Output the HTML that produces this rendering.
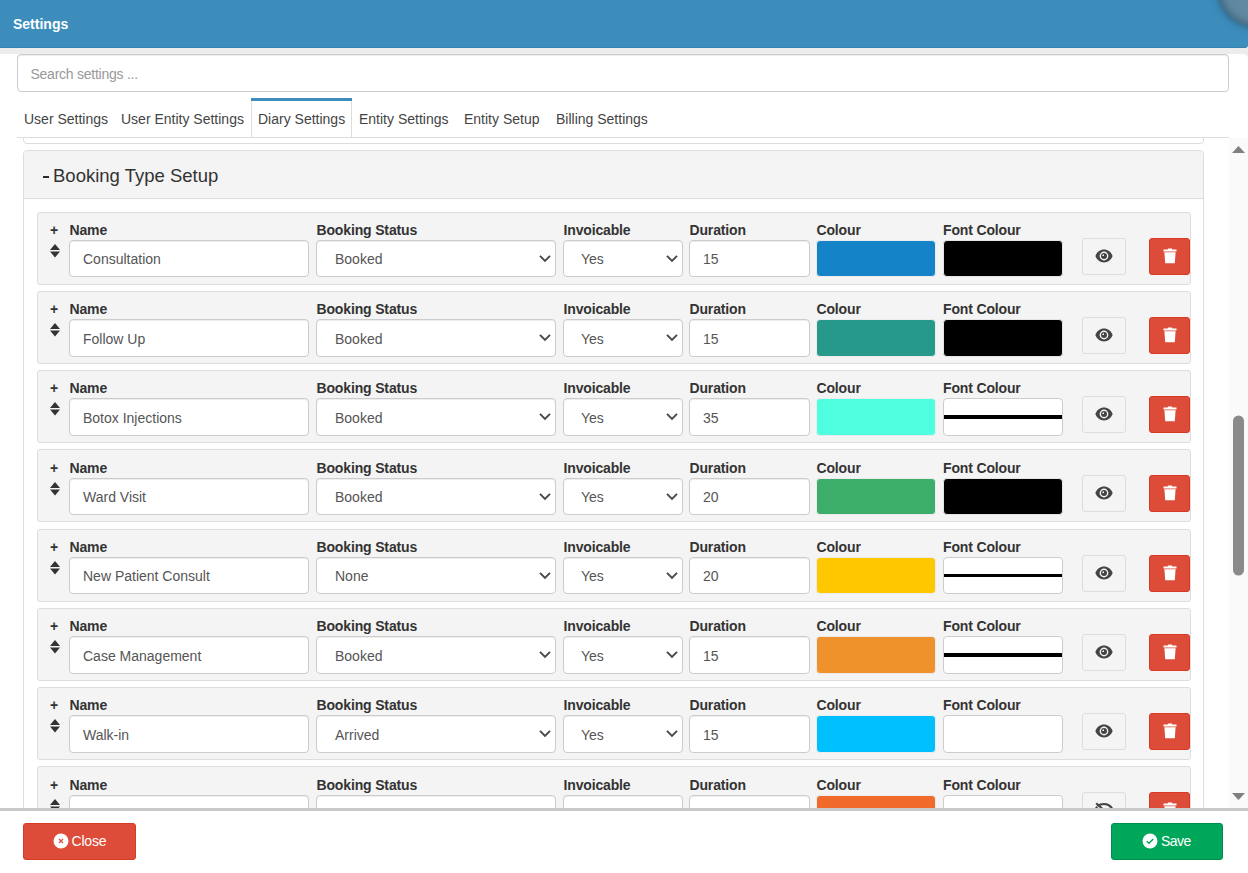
<!DOCTYPE html>
<html><head><meta charset="utf-8">
<style>
*{box-sizing:border-box;margin:0;padding:0}
html,body{width:1248px;height:873px;overflow:hidden;background:#fff;font-family:"Liberation Sans",sans-serif;color:#333}
.abs{position:absolute}
.t{position:absolute;white-space:nowrap;line-height:1}
#hdr{left:0;top:0;width:1248px;height:48px;background:#3c8dbc;border-bottom:1px solid #3582b0;overflow:hidden;border-bottom-right-radius:3px}
#hdr .t{color:#fff;font-weight:bold;font-size:14px;left:13px;top:17px}
#circ{left:1219px;top:-46px;width:72px;height:72px;border-radius:50%;background:#618aa2;box-shadow:0 0 6px 2px rgba(45,80,105,.7),inset 0 0 6px 3px rgba(65,100,125,.85);filter:blur(1.2px)}
#strip{left:0;top:48px;width:1248px;height:6px;background:#ececec}
#search{left:17px;top:54px;width:1212px;height:38px;border:1px solid #ccc;border-radius:4px;background:#fff;box-shadow:inset 0 1px 1px rgba(0,0,0,.075)}
#search .t{left:12.5px;top:11.6px;font-size:14px;letter-spacing:-0.25px;color:#999}
.tab{position:absolute;top:98px;height:40px;font-size:14px;color:#444}
.tab .t{top:14px}
#tabact{left:251px;top:98px;width:101px;height:40px;border:1px solid #ddd;border-top:none;border-bottom:none;background:#fff}#tabact:before{content:"";position:absolute;left:-1px;top:0;width:101px;height:3px;background:#3c8dbc}
#tabline{left:17px;top:137px;width:1212px;height:1px;background:#ddd}
#scroll{left:0;top:138px;width:1229px;height:670px;overflow:hidden}
#prev{left:23px;top:-40px;width:1181px;height:46px;border:1px solid #ddd;border-radius:4px}
#panel{left:23px;top:12px;width:1181px;height:1000px;border:1px solid #ddd;border-radius:4px;background:#fff}
#phead{left:0;top:0;width:1179px;height:48px;background:#f4f4f4;border-bottom:1px solid #ddd;border-radius:3px 3px 0 0}
#phead .t{font-size:18.5px;color:#333}
.row{position:absolute;left:37px;width:1154px;height:73px;background:#f4f4f4;border:1px solid #ddd;border-radius:3px}
.row .plus{position:absolute;left:12px;top:9.6px;font-size:14px;font-weight:bold;line-height:1;color:#333}
.row .lab{position:absolute;top:10px;letter-spacing:-0.15px;font-size:14px;font-weight:bold;line-height:1;color:#333;white-space:nowrap}
.inp{position:absolute;top:27px;height:var(--ih);background:#fff;border:1px solid #ccc;border-radius:4px;box-shadow:inset 0 1px 1px rgba(0,0,0,.075)}
.inp .v{position:absolute;top:calc(var(--ih) - 26px);font-size:14px;line-height:1;color:#555;white-space:nowrap}
.sw{position:absolute;top:27px;height:var(--ih);border:1px solid #ccc;border-radius:4px}
.eye{position:absolute;left:1044px;top:25px;width:44px;height:37px;background:#f4f4f4;border:1px solid #ddd;border-radius:3px}
.del{position:absolute;left:1111px;top:25px;width:41px;height:37px;background:#dd4b39;border:1px solid #d73925;border-radius:3px}
#sb{left:1229px;top:138px;width:19px;height:670px;background:#fafafa}
#footer{left:0;top:808px;width:1248px;height:65px;background:#fff;border-top:3px solid #c8c8c8}
.btn{position:absolute;top:823px;height:37px;border-radius:3px;color:#fff;font-size:14px;letter-spacing:-0.2px}
</style></head><body>
<div id="hdr" class="abs"><div class="t">Settings</div><div id="circ" class="abs"></div></div>
<div id="strip" class="abs"></div><div class="abs" style="left:1244px;top:54px;width:4px;height:4px;background:radial-gradient(circle at 0 100%,#fff 3.2px,#ececec 4.2px)"></div>
<div id="search" class="abs"><div class="t">Search settings ...</div></div>
<div id="tabact" class="abs"></div>
<div class="tab" style="left:24px"><div class="t">User Settings</div></div>
<div class="tab" style="left:121px"><div class="t">User Entity Settings</div></div>
<div class="tab" style="left:258px"><div class="t">Diary Settings</div></div>
<div class="tab" style="left:359px"><div class="t">Entity Settings</div></div>
<div class="tab" style="left:464px"><div class="t">Entity Setup</div></div>
<div class="tab" style="left:556px"><div class="t">Billing Settings</div></div>
<div id="tabline" class="abs"></div>
<div id="scroll" class="abs">
 <div id="prev" class="abs"></div>
 <div id="panel" class="abs">
  <div id="phead" class="abs"><div class="abs" style="left:19.4px;top:24.6px;width:5.6px;height:2.2px;background:#2a2a2a"></div><div class="t" style="left:29px;top:16px">Booking Type Setup</div></div>
 </div>
 <div class="row" style="top:74px"><div style="position:absolute;left:0;top:0px;width:100%;height:100%;--ih:37px"><div class="plus">+</div><svg width="10" height="14" viewBox="0 0 10 14" style="position:absolute;left:12px;top:31px"><path d="M5 0L10 6H0Z" fill="#333"/><path d="M0 7.5H10L5 13.5Z" fill="#333"/></svg><div class="lab" style="left:31.5px">Name</div><div class="lab" style="left:278.5px">Booking Status</div><div class="lab" style="left:525.5px">Invoicable</div><div class="lab" style="left:651.5px">Duration</div><div class="lab" style="left:778.5px">Colour</div><div class="lab" style="left:905.0px">Font Colour</div><div class="inp" style="left:31px;width:240px"><div class="v" style="left:13px">Consultation</div></div><div class="inp" style="left:278px;width:240px"><div class="v" style="left:18px">Booked</div><svg style="position:absolute;left:222px;top:13px" width="13" height="10" viewBox="0 0 13 10"><path d="M1 1.9 L6 6.9 L11 1.9" fill="none" stroke="#4a4a4a" stroke-width="2"/></svg></div><div class="inp" style="left:525px;width:120px"><div class="v" style="left:17px">Yes</div><svg style="position:absolute;left:102px;top:13px" width="13" height="10" viewBox="0 0 13 10"><path d="M1 1.9 L6 6.9 L11 1.9" fill="none" stroke="#4a4a4a" stroke-width="2"/></svg></div><div class="inp" style="left:651px;width:121px"><div class="v" style="left:13px">15</div></div><div class="sw" style="left:778px;width:120px;background:#1583c8;border-color:#ececec"></div><div class="sw" style="left:905px;width:120px;background:#000;border-color:#e4e4e4"></div></div><div class="eye"><svg width="18" height="14" viewBox="0 0 18 14" style="position:absolute;left:11.6px;top:9.7px"><path d="M0.4 7C1.9 3 5.2 0.6 9 0.6C12.8 0.6 16.1 3 17.6 7C16.1 11 12.8 13.4 9 13.4C5.2 13.4 1.9 11 0.4 7Z" fill="#444"/><circle cx="9" cy="7" r="4.4" fill="#f4f4f4"/><circle cx="9" cy="7" r="3" fill="#444"/><path d="M9 5.2A1.8 1.8 0 0 0 7.2 7H9Z" fill="#f4f4f4"/></svg></div><div class="del"><svg width="14" height="16" viewBox="0 0 14 16" style="position:absolute;left:12.5px;top:8.6px"><path d="M0.5 1.6H4.6L5.2 0.4H8.8L9.4 1.6H13.5V3.4H0.5Z" fill="#fff"/><path d="M1.4 4.2H12.6L11.8 15.2H2.2Z" fill="#fff"/></svg></div></div><div class="row" style="top:153px"><div style="position:absolute;left:0;top:0px;width:100%;height:100%;--ih:38px"><div class="plus">+</div><svg width="10" height="14" viewBox="0 0 10 14" style="position:absolute;left:12px;top:31px"><path d="M5 0L10 6H0Z" fill="#333"/><path d="M0 7.5H10L5 13.5Z" fill="#333"/></svg><div class="lab" style="left:31.5px">Name</div><div class="lab" style="left:278.5px">Booking Status</div><div class="lab" style="left:525.5px">Invoicable</div><div class="lab" style="left:651.5px">Duration</div><div class="lab" style="left:778.5px">Colour</div><div class="lab" style="left:905.0px">Font Colour</div><div class="inp" style="left:31px;width:240px"><div class="v" style="left:13px">Follow Up</div></div><div class="inp" style="left:278px;width:240px"><div class="v" style="left:18px">Booked</div><svg style="position:absolute;left:222px;top:13px" width="13" height="10" viewBox="0 0 13 10"><path d="M1 1.9 L6 6.9 L11 1.9" fill="none" stroke="#4a4a4a" stroke-width="2"/></svg></div><div class="inp" style="left:525px;width:120px"><div class="v" style="left:17px">Yes</div><svg style="position:absolute;left:102px;top:13px" width="13" height="10" viewBox="0 0 13 10"><path d="M1 1.9 L6 6.9 L11 1.9" fill="none" stroke="#4a4a4a" stroke-width="2"/></svg></div><div class="inp" style="left:651px;width:121px"><div class="v" style="left:13px">15</div></div><div class="sw" style="left:778px;width:120px;background:#26998b;border-color:#ececec"></div><div class="sw" style="left:905px;width:120px;background:#000;border-color:#e4e4e4"></div></div><div class="eye"><svg width="18" height="14" viewBox="0 0 18 14" style="position:absolute;left:11.6px;top:9.7px"><path d="M0.4 7C1.9 3 5.2 0.6 9 0.6C12.8 0.6 16.1 3 17.6 7C16.1 11 12.8 13.4 9 13.4C5.2 13.4 1.9 11 0.4 7Z" fill="#444"/><circle cx="9" cy="7" r="4.4" fill="#f4f4f4"/><circle cx="9" cy="7" r="3" fill="#444"/><path d="M9 5.2A1.8 1.8 0 0 0 7.2 7H9Z" fill="#f4f4f4"/></svg></div><div class="del"><svg width="14" height="16" viewBox="0 0 14 16" style="position:absolute;left:12.5px;top:8.6px"><path d="M0.5 1.6H4.6L5.2 0.4H8.8L9.4 1.6H13.5V3.4H0.5Z" fill="#fff"/><path d="M1.4 4.2H12.6L11.8 15.2H2.2Z" fill="#fff"/></svg></div></div><div class="row" style="top:232px"><div style="position:absolute;left:0;top:0px;width:100%;height:100%;--ih:38px"><div class="plus">+</div><svg width="10" height="14" viewBox="0 0 10 14" style="position:absolute;left:12px;top:31px"><path d="M5 0L10 6H0Z" fill="#333"/><path d="M0 7.5H10L5 13.5Z" fill="#333"/></svg><div class="lab" style="left:31.5px">Name</div><div class="lab" style="left:278.5px">Booking Status</div><div class="lab" style="left:525.5px">Invoicable</div><div class="lab" style="left:651.5px">Duration</div><div class="lab" style="left:778.5px">Colour</div><div class="lab" style="left:905.0px">Font Colour</div><div class="inp" style="left:31px;width:240px"><div class="v" style="left:13px">Botox Injections</div></div><div class="inp" style="left:278px;width:240px"><div class="v" style="left:18px">Booked</div><svg style="position:absolute;left:222px;top:13px" width="13" height="10" viewBox="0 0 13 10"><path d="M1 1.9 L6 6.9 L11 1.9" fill="none" stroke="#4a4a4a" stroke-width="2"/></svg></div><div class="inp" style="left:525px;width:120px"><div class="v" style="left:17px">Yes</div><svg style="position:absolute;left:102px;top:13px" width="13" height="10" viewBox="0 0 13 10"><path d="M1 1.9 L6 6.9 L11 1.9" fill="none" stroke="#4a4a4a" stroke-width="2"/></svg></div><div class="inp" style="left:651px;width:121px"><div class="v" style="left:13px">35</div></div><div class="sw" style="left:778px;width:120px;background:#50ffe0;border-color:#ececec"></div><div class="sw" style="left:905px;width:120px;background:#fff"><div style="position:absolute;left:0;right:0;top:16px;height:calc(var(--ih) - 34px);background:#000"></div></div></div><div class="eye"><svg width="18" height="14" viewBox="0 0 18 14" style="position:absolute;left:11.6px;top:9.7px"><path d="M0.4 7C1.9 3 5.2 0.6 9 0.6C12.8 0.6 16.1 3 17.6 7C16.1 11 12.8 13.4 9 13.4C5.2 13.4 1.9 11 0.4 7Z" fill="#444"/><circle cx="9" cy="7" r="4.4" fill="#f4f4f4"/><circle cx="9" cy="7" r="3" fill="#444"/><path d="M9 5.2A1.8 1.8 0 0 0 7.2 7H9Z" fill="#f4f4f4"/></svg></div><div class="del"><svg width="14" height="16" viewBox="0 0 14 16" style="position:absolute;left:12.5px;top:8.6px"><path d="M0.5 1.6H4.6L5.2 0.4H8.8L9.4 1.6H13.5V3.4H0.5Z" fill="#fff"/><path d="M1.4 4.2H12.6L11.8 15.2H2.2Z" fill="#fff"/></svg></div></div><div class="row" style="top:311px"><div style="position:absolute;left:0;top:1px;width:100%;height:100%;--ih:37px"><div class="plus">+</div><svg width="10" height="14" viewBox="0 0 10 14" style="position:absolute;left:12px;top:31px"><path d="M5 0L10 6H0Z" fill="#333"/><path d="M0 7.5H10L5 13.5Z" fill="#333"/></svg><div class="lab" style="left:31.5px">Name</div><div class="lab" style="left:278.5px">Booking Status</div><div class="lab" style="left:525.5px">Invoicable</div><div class="lab" style="left:651.5px">Duration</div><div class="lab" style="left:778.5px">Colour</div><div class="lab" style="left:905.0px">Font Colour</div><div class="inp" style="left:31px;width:240px"><div class="v" style="left:13px">Ward Visit</div></div><div class="inp" style="left:278px;width:240px"><div class="v" style="left:18px">Booked</div><svg style="position:absolute;left:222px;top:13px" width="13" height="10" viewBox="0 0 13 10"><path d="M1 1.9 L6 6.9 L11 1.9" fill="none" stroke="#4a4a4a" stroke-width="2"/></svg></div><div class="inp" style="left:525px;width:120px"><div class="v" style="left:17px">Yes</div><svg style="position:absolute;left:102px;top:13px" width="13" height="10" viewBox="0 0 13 10"><path d="M1 1.9 L6 6.9 L11 1.9" fill="none" stroke="#4a4a4a" stroke-width="2"/></svg></div><div class="inp" style="left:651px;width:121px"><div class="v" style="left:13px">20</div></div><div class="sw" style="left:778px;width:120px;background:#3cae6a;border-color:#ececec"></div><div class="sw" style="left:905px;width:120px;background:#000;border-color:#e4e4e4"></div></div><div class="eye"><svg width="18" height="14" viewBox="0 0 18 14" style="position:absolute;left:11.6px;top:9.7px"><path d="M0.4 7C1.9 3 5.2 0.6 9 0.6C12.8 0.6 16.1 3 17.6 7C16.1 11 12.8 13.4 9 13.4C5.2 13.4 1.9 11 0.4 7Z" fill="#444"/><circle cx="9" cy="7" r="4.4" fill="#f4f4f4"/><circle cx="9" cy="7" r="3" fill="#444"/><path d="M9 5.2A1.8 1.8 0 0 0 7.2 7H9Z" fill="#f4f4f4"/></svg></div><div class="del"><svg width="14" height="16" viewBox="0 0 14 16" style="position:absolute;left:12.5px;top:8.6px"><path d="M0.5 1.6H4.6L5.2 0.4H8.8L9.4 1.6H13.5V3.4H0.5Z" fill="#fff"/><path d="M1.4 4.2H12.6L11.8 15.2H2.2Z" fill="#fff"/></svg></div></div><div class="row" style="top:391px"><div style="position:absolute;left:0;top:0px;width:100%;height:100%;--ih:37px"><div class="plus">+</div><svg width="10" height="14" viewBox="0 0 10 14" style="position:absolute;left:12px;top:31px"><path d="M5 0L10 6H0Z" fill="#333"/><path d="M0 7.5H10L5 13.5Z" fill="#333"/></svg><div class="lab" style="left:31.5px">Name</div><div class="lab" style="left:278.5px">Booking Status</div><div class="lab" style="left:525.5px">Invoicable</div><div class="lab" style="left:651.5px">Duration</div><div class="lab" style="left:778.5px">Colour</div><div class="lab" style="left:905.0px">Font Colour</div><div class="inp" style="left:31px;width:240px"><div class="v" style="left:13px">New Patient Consult</div></div><div class="inp" style="left:278px;width:240px"><div class="v" style="left:18px">None</div><svg style="position:absolute;left:222px;top:13px" width="13" height="10" viewBox="0 0 13 10"><path d="M1 1.9 L6 6.9 L11 1.9" fill="none" stroke="#4a4a4a" stroke-width="2"/></svg></div><div class="inp" style="left:525px;width:120px"><div class="v" style="left:17px">Yes</div><svg style="position:absolute;left:102px;top:13px" width="13" height="10" viewBox="0 0 13 10"><path d="M1 1.9 L6 6.9 L11 1.9" fill="none" stroke="#4a4a4a" stroke-width="2"/></svg></div><div class="inp" style="left:651px;width:121px"><div class="v" style="left:13px">20</div></div><div class="sw" style="left:778px;width:120px;background:#ffc700;border-color:#ececec"></div><div class="sw" style="left:905px;width:120px;background:#fff"><div style="position:absolute;left:0;right:0;top:16px;height:calc(var(--ih) - 34px);background:#000"></div></div></div><div class="eye"><svg width="18" height="14" viewBox="0 0 18 14" style="position:absolute;left:11.6px;top:9.7px"><path d="M0.4 7C1.9 3 5.2 0.6 9 0.6C12.8 0.6 16.1 3 17.6 7C16.1 11 12.8 13.4 9 13.4C5.2 13.4 1.9 11 0.4 7Z" fill="#444"/><circle cx="9" cy="7" r="4.4" fill="#f4f4f4"/><circle cx="9" cy="7" r="3" fill="#444"/><path d="M9 5.2A1.8 1.8 0 0 0 7.2 7H9Z" fill="#f4f4f4"/></svg></div><div class="del"><svg width="14" height="16" viewBox="0 0 14 16" style="position:absolute;left:12.5px;top:8.6px"><path d="M0.5 1.6H4.6L5.2 0.4H8.8L9.4 1.6H13.5V3.4H0.5Z" fill="#fff"/><path d="M1.4 4.2H12.6L11.8 15.2H2.2Z" fill="#fff"/></svg></div></div><div class="row" style="top:470px"><div style="position:absolute;left:0;top:0px;width:100%;height:100%;--ih:38px"><div class="plus">+</div><svg width="10" height="14" viewBox="0 0 10 14" style="position:absolute;left:12px;top:31px"><path d="M5 0L10 6H0Z" fill="#333"/><path d="M0 7.5H10L5 13.5Z" fill="#333"/></svg><div class="lab" style="left:31.5px">Name</div><div class="lab" style="left:278.5px">Booking Status</div><div class="lab" style="left:525.5px">Invoicable</div><div class="lab" style="left:651.5px">Duration</div><div class="lab" style="left:778.5px">Colour</div><div class="lab" style="left:905.0px">Font Colour</div><div class="inp" style="left:31px;width:240px"><div class="v" style="left:13px">Case Management</div></div><div class="inp" style="left:278px;width:240px"><div class="v" style="left:18px">Booked</div><svg style="position:absolute;left:222px;top:13px" width="13" height="10" viewBox="0 0 13 10"><path d="M1 1.9 L6 6.9 L11 1.9" fill="none" stroke="#4a4a4a" stroke-width="2"/></svg></div><div class="inp" style="left:525px;width:120px"><div class="v" style="left:17px">Yes</div><svg style="position:absolute;left:102px;top:13px" width="13" height="10" viewBox="0 0 13 10"><path d="M1 1.9 L6 6.9 L11 1.9" fill="none" stroke="#4a4a4a" stroke-width="2"/></svg></div><div class="inp" style="left:651px;width:121px"><div class="v" style="left:13px">15</div></div><div class="sw" style="left:778px;width:120px;background:#f0922b;border-color:#ececec"></div><div class="sw" style="left:905px;width:120px;background:#fff"><div style="position:absolute;left:0;right:0;top:16px;height:calc(var(--ih) - 34px);background:#000"></div></div></div><div class="eye"><svg width="18" height="14" viewBox="0 0 18 14" style="position:absolute;left:11.6px;top:9.7px"><path d="M0.4 7C1.9 3 5.2 0.6 9 0.6C12.8 0.6 16.1 3 17.6 7C16.1 11 12.8 13.4 9 13.4C5.2 13.4 1.9 11 0.4 7Z" fill="#444"/><circle cx="9" cy="7" r="4.4" fill="#f4f4f4"/><circle cx="9" cy="7" r="3" fill="#444"/><path d="M9 5.2A1.8 1.8 0 0 0 7.2 7H9Z" fill="#f4f4f4"/></svg></div><div class="del"><svg width="14" height="16" viewBox="0 0 14 16" style="position:absolute;left:12.5px;top:8.6px"><path d="M0.5 1.6H4.6L5.2 0.4H8.8L9.4 1.6H13.5V3.4H0.5Z" fill="#fff"/><path d="M1.4 4.2H12.6L11.8 15.2H2.2Z" fill="#fff"/></svg></div></div><div class="row" style="top:549px"><div style="position:absolute;left:0;top:0px;width:100%;height:100%;--ih:38px"><div class="plus">+</div><svg width="10" height="14" viewBox="0 0 10 14" style="position:absolute;left:12px;top:31px"><path d="M5 0L10 6H0Z" fill="#333"/><path d="M0 7.5H10L5 13.5Z" fill="#333"/></svg><div class="lab" style="left:31.5px">Name</div><div class="lab" style="left:278.5px">Booking Status</div><div class="lab" style="left:525.5px">Invoicable</div><div class="lab" style="left:651.5px">Duration</div><div class="lab" style="left:778.5px">Colour</div><div class="lab" style="left:905.0px">Font Colour</div><div class="inp" style="left:31px;width:240px"><div class="v" style="left:13px">Walk-in</div></div><div class="inp" style="left:278px;width:240px"><div class="v" style="left:18px">Arrived</div><svg style="position:absolute;left:222px;top:13px" width="13" height="10" viewBox="0 0 13 10"><path d="M1 1.9 L6 6.9 L11 1.9" fill="none" stroke="#4a4a4a" stroke-width="2"/></svg></div><div class="inp" style="left:525px;width:120px"><div class="v" style="left:17px">Yes</div><svg style="position:absolute;left:102px;top:13px" width="13" height="10" viewBox="0 0 13 10"><path d="M1 1.9 L6 6.9 L11 1.9" fill="none" stroke="#4a4a4a" stroke-width="2"/></svg></div><div class="inp" style="left:651px;width:121px"><div class="v" style="left:13px">15</div></div><div class="sw" style="left:778px;width:120px;background:#00bfff;border-color:#ececec"></div><div class="sw" style="left:905px;width:120px;background:#fff"></div></div><div class="eye"><svg width="18" height="14" viewBox="0 0 18 14" style="position:absolute;left:11.6px;top:9.7px"><path d="M0.4 7C1.9 3 5.2 0.6 9 0.6C12.8 0.6 16.1 3 17.6 7C16.1 11 12.8 13.4 9 13.4C5.2 13.4 1.9 11 0.4 7Z" fill="#444"/><circle cx="9" cy="7" r="4.4" fill="#f4f4f4"/><circle cx="9" cy="7" r="3" fill="#444"/><path d="M9 5.2A1.8 1.8 0 0 0 7.2 7H9Z" fill="#f4f4f4"/></svg></div><div class="del"><svg width="14" height="16" viewBox="0 0 14 16" style="position:absolute;left:12.5px;top:8.6px"><path d="M0.5 1.6H4.6L5.2 0.4H8.8L9.4 1.6H13.5V3.4H0.5Z" fill="#fff"/><path d="M1.4 4.2H12.6L11.8 15.2H2.2Z" fill="#fff"/></svg></div></div><div class="row" style="top:628px"><div style="position:absolute;left:0;top:1px;width:100%;height:100%;--ih:37px"><div class="plus">+</div><svg width="10" height="14" viewBox="0 0 10 14" style="position:absolute;left:12px;top:31px"><path d="M5 0L10 6H0Z" fill="#333"/><path d="M0 7.5H10L5 13.5Z" fill="#333"/></svg><div class="lab" style="left:31.5px">Name</div><div class="lab" style="left:278.5px">Booking Status</div><div class="lab" style="left:525.5px">Invoicable</div><div class="lab" style="left:651.5px">Duration</div><div class="lab" style="left:778.5px">Colour</div><div class="lab" style="left:905.0px">Font Colour</div><div class="inp" style="left:31px;width:240px"><div class="v" style="left:13px"></div></div><div class="inp" style="left:278px;width:240px"><div class="v" style="left:18px"></div><svg style="position:absolute;left:222px;top:13px" width="13" height="10" viewBox="0 0 13 10"><path d="M1 1.9 L6 6.9 L11 1.9" fill="none" stroke="#4a4a4a" stroke-width="2"/></svg></div><div class="inp" style="left:525px;width:120px"><div class="v" style="left:17px"></div><svg style="position:absolute;left:102px;top:13px" width="13" height="10" viewBox="0 0 13 10"><path d="M1 1.9 L6 6.9 L11 1.9" fill="none" stroke="#4a4a4a" stroke-width="2"/></svg></div><div class="inp" style="left:651px;width:121px"><div class="v" style="left:13px"></div></div><div class="sw" style="left:778px;width:120px;background:#f06a2b;border-color:#ececec"></div><div class="sw" style="left:905px;width:120px;background:#fff"></div></div><div class="eye"><svg width="20" height="16" viewBox="0 0 20 16" style="position:absolute;left:11px;top:9px"><path d="M3.5 4.2C5.2 2.8 7.3 2 10 2C14 2 17.3 4.6 18.8 8C18.2 9.3 17.4 10.4 16.4 11.4M13.6 13.3C12.5 13.8 11.3 14 10 14C6 14 2.7 11.4 1.2 8C1.7 6.8 2.4 5.8 3.3 4.9" fill="none" stroke="#444" stroke-width="2.2"/><path d="M2.2 1.2L17.5 15" stroke="#444" stroke-width="2"/></svg></div><div class="del"><svg width="14" height="16" viewBox="0 0 14 16" style="position:absolute;left:12.5px;top:8.6px"><path d="M0.5 1.6H4.6L5.2 0.4H8.8L9.4 1.6H13.5V3.4H0.5Z" fill="#fff"/><path d="M1.4 4.2H12.6L11.8 15.2H2.2Z" fill="#fff"/></svg></div></div>
</div>
<div id="sb" class="abs"><svg width="19" height="670" style="position:absolute;left:0;top:0"><path d="M3 15H16L9.5 8Z" fill="#808080"/><path d="M3 655H16L9.5 662Z" fill="#808080"/><rect x="4" y="277.5" width="11" height="160" rx="5.5" fill="#8a8a8a"/></svg></div>
<div id="footer" class="abs"></div>
<div class="btn" style="left:23px;width:113px;background:#dd4b39;border:1px solid #d73925"><svg width="16" height="16" viewBox="0 0 16 16" style="position:absolute;left:28.5px;top:8.5px"><circle cx="8" cy="8" r="7.5" fill="#fff"/><path d="M6 6L10 10M10 6L6 10" stroke="#dd4b39" stroke-width="1.2"/></svg><div class="t" style="left:47.5px;top:10px">Close</div></div>
<div class="btn" style="left:1111px;width:112px;background:#00a65a;border:1px solid #008d4c"><svg width="16" height="16" viewBox="0 0 16 16" style="position:absolute;left:30px;top:8.5px"><circle cx="8" cy="8" r="7.5" fill="#fff"/><path d="M4.8 8.2L7 10.3L11.2 6" fill="none" stroke="#00a65a" stroke-width="1.4"/></svg><div class="t" style="left:49px;top:10px;letter-spacing:-0.5px">Save</div></div>
</body></html>
